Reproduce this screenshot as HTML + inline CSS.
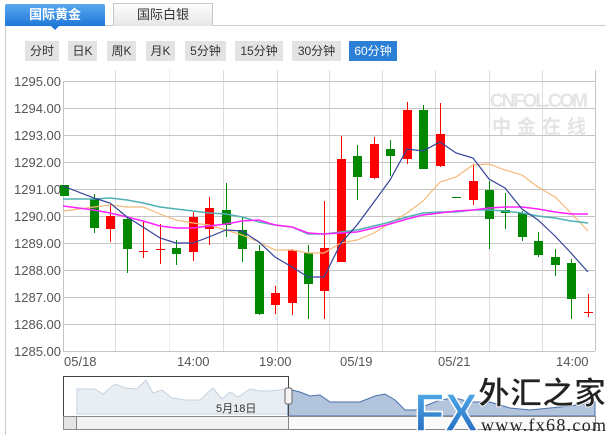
<!DOCTYPE html>
<html><head><meta charset="utf-8"><style>
body{margin:0;width:606px;height:435px;background:#fff;overflow:hidden;position:relative;font-family:"Liberation Sans","Noto Sans CJK SC",sans-serif}
.t{position:absolute;font-size:13px;text-align:center}
.b{position:absolute;top:41px;height:20px;line-height:20px;background:#e3e3e3;color:#333;font-size:12px;text-align:center}
</style></head><body>
<div style="position:absolute;left:5px;top:25px;width:601px;border-top:1px solid #ccc"></div>
<div style="position:absolute;left:5px;top:25px;height:410px;border-left:1px solid #ccc"></div>
<div class="t" style="left:5px;top:4px;width:100px;height:22px;line-height:22px;background:linear-gradient(#5aa8ef,#1f78d8);color:#fff;font-weight:bold;border-radius:2px 2px 0 0">国际黄金</div>
<div style="position:absolute;left:51px;top:26px;border:4px solid transparent;border-top:4px solid #1f78d8"></div>
<div class="t" style="left:113px;top:3px;width:98px;height:22px;line-height:22px;background:linear-gradient(#fdfdfd,#e6e6e6);border:1px solid #c8c8c8;border-bottom:none;color:#333">国际白银</div>
<div class="b" style="left:25px;width:34px">分时</div>
<div class="b" style="left:68px;width:29px">日K</div>
<div class="b" style="left:107px;width:29px">周K</div>
<div class="b" style="left:146px;width:29px">月K</div>
<div class="b" style="left:185px;width:41px">5分钟</div>
<div class="b" style="left:235px;width:48px">15分钟</div>
<div class="b" style="left:292px;width:49px">30分钟</div>
<div class="b" style="left:349px;width:48px;background:#2b7fd6;color:#fff">60分钟</div>
<svg style="position:absolute;left:0;top:0" width="606" height="435" font-family="Liberation Sans, Noto Sans CJK SC, sans-serif">
<defs><linearGradient id="fx" x1="0" y1="0" x2="0" y2="1"><stop offset="0" stop-color="#5ab6f0"/><stop offset="1" stop-color="#1a5fb8"/></linearGradient></defs>
<g stroke="#ddd" stroke-width="1">
<line x1="115.5" y1="70" x2="115.5" y2="351"/><line x1="169.5" y1="70" x2="169.5" y2="351" stroke="#eee"/><line x1="223.5" y1="70" x2="223.5" y2="351"/><line x1="277.5" y1="70" x2="277.5" y2="351"/><line x1="329.5" y1="70" x2="329.5" y2="351"/><line x1="382.5" y1="70" x2="382.5" y2="351"/><line x1="435.5" y1="70" x2="435.5" y2="351"/><line x1="489.5" y1="70" x2="489.5" y2="351"/><line x1="542.5" y1="70" x2="542.5" y2="351"/>
</g>
<g stroke="#c4c4c4">
<line x1="63" y1="81.5" x2="595" y2="81.5"/><line x1="63" y1="108.5" x2="595" y2="108.5"/><line x1="63" y1="135.5" x2="595" y2="135.5"/><line x1="63" y1="162.5" x2="595" y2="162.5"/><line x1="63" y1="189.5" x2="595" y2="189.5"/><line x1="63" y1="216.5" x2="595" y2="216.5"/><line x1="63" y1="243.5" x2="595" y2="243.5"/><line x1="63" y1="270.5" x2="595" y2="270.5"/><line x1="63" y1="297.5" x2="595" y2="297.5"/><line x1="63" y1="324.5" x2="595" y2="324.5"/><line x1="63" y1="351.5" x2="595" y2="351.5"/>
<line x1="63.5" y1="81" x2="63.5" y2="351"/><line x1="595.5" y1="70" x2="595.5" y2="351"/>
</g>
<g font-size="13" fill="#555" text-anchor="end">
<text x="61" y="86">1295.00</text><text x="61" y="113">1294.00</text><text x="61" y="140">1293.00</text><text x="61" y="167">1292.00</text><text x="61" y="194">1291.00</text><text x="61" y="221">1290.00</text><text x="61" y="248">1289.00</text><text x="61" y="275">1288.00</text><text x="61" y="302">1287.00</text><text x="61" y="329">1286.00</text><text x="61" y="356">1285.00</text>
</g>
<g font-size="13" fill="#555">
<text x="64" y="366">05/18</text><text x="177" y="366">14:00</text><text x="259" y="366">19:00</text><text x="340" y="366">05/19</text><text x="438" y="366">05/21</text><text x="556" y="366">14:00</text>
</g>
<g fill="#e4e4e4" font-weight="bold"><text x="490" y="107" font-size="19" textLength="98">CNFOL.COM</text><text x="492" y="133" font-size="19" letter-spacing="6">中金在线</text></g>
<g id="c" stroke-width="1"></g>
<g fill="none" stroke-width="1.2">
<polyline stroke="#f5b97a" points="63,211 94,207 110,205 127,207 143,207 160,214 176,220 193,223 209,225 226,230 242,235 259,242 275,250 292,250 308,253 324,253 341,243 357,240 374,233 390,223 407,213 423,201 440,182 456,177 473,165 489,164 505,170 522,175 538,187 555,197 571,213 588,231"/>
<polyline stroke="#4fb0b4" stroke-width="1.5" points="63,199 94,199 110,198 127,200 143,203 160,207 176,209 193,211 209,213 226,214 242,217 259,222 275,225 292,227 308,234 324,234 341,232 357,230 374,226 390,222 407,217 423,213 440,212 456,212 473,210 489,210 505,211 522,213 538,216 555,218 571,221 588,223"/>
<polyline stroke="#ff22ff" stroke-width="1.5" points="63,206 94,210 110,213 127,217 143,221 160,226 176,228 193,228 209,226 226,224 242,221 259,220 275,225 292,227 308,233 324,234 341,233 357,232 374,228 390,224 407,219 423,215 440,213 456,211 473,210 489,208 505,207 522,207 538,209 555,212 571,214 588,214"/>
<polyline stroke="#334499" points="63,186 94,198 110,203 127,217 143,227 160,238 176,243 193,243 209,237 226,230 242,231 259,242 275,257 292,267 308,277 324,277 341,243 357,225 374,202 390,180 407,149 423,151 440,142 456,153 473,158 489,179 505,188 522,209 538,220 555,236 571,253 588,272"/>
</g>
<rect x="63" y="376" width="532" height="40" fill="#fff"/>
<path d="M77,389 L95,389 103,394 115,384 125,388 137,389 146,380 153,393 162,390 172,398 185,400 200,400 213,388 222,399 230,392 238,397 250,389 260,391 270,391 288,389 288,414 77,414Z" fill="#e9eef3" stroke="#c6d2e0"/>
<path d="M288,389 300,392 310,396 320,395 330,402 340,402 360,402 375,396 385,394 395,400 405,410 415,410 430,404 440,400 455,398 470,402 490,402 510,408 530,410 550,408 570,406 595,402 595,416 288,416Z" fill="#b3c5dc" stroke="#4a70aa"/>
<rect x="63.5" y="376.5" width="225" height="40" fill="none" stroke="#444"/>
<rect x="285" y="388" width="7" height="16" rx="2" fill="#f4f4f4" stroke="#666"/>
<text x="216" y="412" font-size="11" fill="#333">5月18日</text>
<rect x="63.5" y="416.5" width="532" height="13" fill="#f2f2f2" stroke="#888"/>
<rect x="63.5" y="416.5" width="13" height="13" fill="#e4e4e4" stroke="#888"/>
<rect x="288.5" y="416.5" width="307" height="13" fill="#fafafa" stroke="#888"/>
<text x="414" y="431" font-size="54" font-weight="bold" fill="url(#fx)" stroke="#fff" stroke-width="1.5" textLength="64" lengthAdjust="spacingAndGlyphs">FX</text>
<text x="478" y="404" font-size="31" font-weight="bold" fill="#222" stroke="#fff" stroke-width="0.8" textLength="128" lengthAdjust="spacingAndGlyphs">外汇之家</text>
<text x="481" y="431" font-size="18" fill="#222" font-family="Liberation Serif, serif" textLength="125">www.fx68.com</text>
</svg>
<script>
var d=[[64,185,196,185,196,0],[94,194,233,199,228,0],[110,204,242,216,229,1],[127,217,273,219,249,0],[143,222,258,251,251,1],[160,224,264,249,249,1],[176,240,265,248,254,0],[193,212,261,217,252,1],[209,197,245,208,229,1],[226,183,237,210,225,0],[242,217,262,230,249,0],[259,245,315,251,314,0],[275,286,314,293,305,1],[292,249,315,250,303,1],[308,245,319,253,284,0],[324,201,319,248,291,1],[341,136,262,159,262,1],[357,145,200,156,177,0],[374,137,179,144,178,1],[390,140,176,149,156,0],[407,102,164,110,159,1],[423,105,169,110,169,0],[440,103,167,134,166,1],[456,197,197,197,197,0],[473,164,205,181,200,1],[489,181,249,190,219,0],[505,193,229,210,213,0],[522,211,241,213,237,0],[538,232,257,241,255,0],[555,249,276,257,265,0],[571,259,319,263,299,0],[588,294,317,312,312,1]];
var s='';d.forEach(function(c){var col=c[5]?'#ff0000':'#008800';s+='<line x1="'+(c[0]+.5)+'" y1="'+c[1]+'" x2="'+(c[0]+.5)+'" y2="'+c[2]+'" stroke="'+col+'"/>';var h=Math.max(c[4]-c[3],1);s+='<rect x="'+(c[0]-4)+'" y="'+c[3]+'" width="9" height="'+h+'" fill="'+col+'"/>';});
document.getElementById('c').innerHTML=s;
</script>
</body></html>
